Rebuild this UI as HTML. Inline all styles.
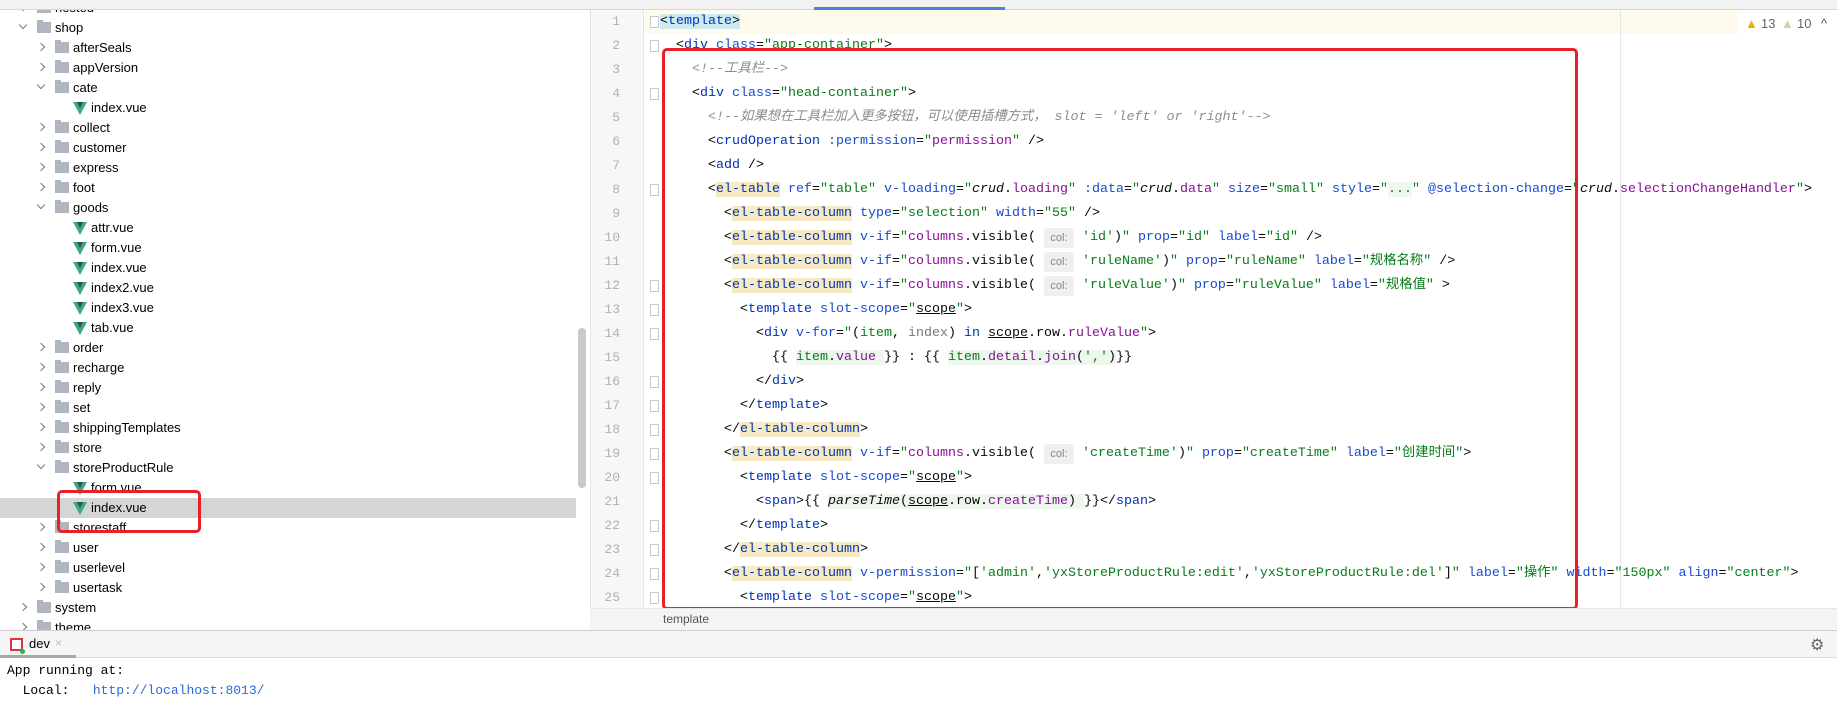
<!DOCTYPE html>
<html><head><meta charset="utf-8">
<style>
*{margin:0;padding:0;box-sizing:border-box}
body{width:1837px;height:693px;overflow:hidden;background:#fff;position:relative;font-family:"Liberation Sans","Noto Sans CJK SC",sans-serif}
.abs{position:absolute}
.topbar{left:0;top:0;width:1837px;height:10px;background:#f2f2f2;border-bottom:1px solid #d6d6d6}
.tree{left:0;top:10px;width:590px;height:620px;overflow:hidden}
.row{position:absolute;left:0;width:576px;height:20px;font-size:13px;line-height:20px;color:#000;white-space:nowrap}
.row.sel{background:#d5d5d5;width:576px}
.chev{position:absolute;top:6px;width:6px;height:6px;border-right:1px solid #777;border-bottom:1px solid #777}
.chev.r{transform:rotate(-45deg)}
.chev.d{transform:rotate(45deg);top:4px}
.fold{position:absolute;top:4px;width:14px;height:11px;background:#afb6bf}
.fold:before{content:"";position:absolute;left:0;top:-2px;width:6px;height:2px;background:#afb6bf}
.vue{position:absolute;top:4px;width:0;height:0;border-left:7px solid transparent;border-right:7px solid transparent;border-top:13px solid #3aa882}
.vue:after{content:"";position:absolute;left:-3px;top:-13px;border-left:3px solid transparent;border-right:3px solid transparent;border-top:6px solid #2f4d5e}
.txt{position:absolute;top:0}
.sb{left:578px;top:328px;width:8px;height:160px;background:#c9c9c9;border-radius:4px}
.gutter{left:590px;top:10px;width:54px;height:598px;background:#f7f7f7;border-right:1px solid #e4e4e4;border-left:1px solid #e4e4e4}
.ln{position:absolute;left:590px;width:30px;text-align:right;font-family:"Liberation Mono",monospace;font-size:13px;color:#adb1b8;line-height:24px}
.fm{position:absolute;left:650px;width:9px;height:12px;border:1px solid #c8c8c8;border-radius:1px;background:#fff}
.code{left:660px;top:10px;font-family:"Liberation Mono","Noto Sans CJK SC",monospace;font-size:13.33px;line-height:24px;white-space:pre;color:#080808}
.t{color:#0033b3}.a{color:#174ad4}.v{color:#067d17}.c{color:#8c8c8c;font-style:italic}.p{color:#871094}.i{font-style:italic}
.hl{background:#f5eac3}.g{background:#edf7ee}.u{text-decoration:underline}
.h{display:inline-block;width:30px;height:20px;line-height:20px;background:#efefef;color:#888;font-size:11px;text-align:center;border-radius:3px;vertical-align:top;margin-top:2px;font-family:"Liberation Sans",sans-serif}
.cur{background:#fefbec;left:645px;top:10px;width:1092px;height:24px}
.margin{left:1620px;top:10px;width:1px;height:598px;background:#e6e6e6}
.crumb{left:590px;top:608px;width:1247px;height:22px;background:#f4f4f4;border-top:1px solid #e6e6e6}
.btab{left:0;top:630px;width:1837px;height:28px;background:#f5f5f5;border-top:1px solid #cfcfcf;border-bottom:1px solid #dcdcdc}
.red{border:3px solid #e8202a;border-radius:5px}
</style></head><body>
<div class="abs topbar"></div>
<div class="abs" style="left:814px;top:7px;width:191px;height:3px;background:#4a84d8"></div>

<div class="abs tree">
<div class="row" style="top:-12px"><span class="chev r" style="left:20px"></span><span class="fold" style="left:37px"></span><span class="txt" style="left:55px">nested</span></div>
<div class="row" style="top:8px"><span class="chev d" style="left:20px"></span><span class="fold" style="left:37px"></span><span class="txt" style="left:55px">shop</span></div>
<div class="row" style="top:28px"><span class="chev r" style="left:38px"></span><span class="fold" style="left:55px"></span><span class="txt" style="left:73px">afterSeals</span></div>
<div class="row" style="top:48px"><span class="chev r" style="left:38px"></span><span class="fold" style="left:55px"></span><span class="txt" style="left:73px">appVersion</span></div>
<div class="row" style="top:68px"><span class="chev d" style="left:38px"></span><span class="fold" style="left:55px"></span><span class="txt" style="left:73px">cate</span></div>
<div class="row" style="top:88px"><span class="vue" style="left:73px"></span><span class="txt" style="left:91px">index.vue</span></div>
<div class="row" style="top:108px"><span class="chev r" style="left:38px"></span><span class="fold" style="left:55px"></span><span class="txt" style="left:73px">collect</span></div>
<div class="row" style="top:128px"><span class="chev r" style="left:38px"></span><span class="fold" style="left:55px"></span><span class="txt" style="left:73px">customer</span></div>
<div class="row" style="top:148px"><span class="chev r" style="left:38px"></span><span class="fold" style="left:55px"></span><span class="txt" style="left:73px">express</span></div>
<div class="row" style="top:168px"><span class="chev r" style="left:38px"></span><span class="fold" style="left:55px"></span><span class="txt" style="left:73px">foot</span></div>
<div class="row" style="top:188px"><span class="chev d" style="left:38px"></span><span class="fold" style="left:55px"></span><span class="txt" style="left:73px">goods</span></div>
<div class="row" style="top:208px"><span class="vue" style="left:73px"></span><span class="txt" style="left:91px">attr.vue</span></div>
<div class="row" style="top:228px"><span class="vue" style="left:73px"></span><span class="txt" style="left:91px">form.vue</span></div>
<div class="row" style="top:248px"><span class="vue" style="left:73px"></span><span class="txt" style="left:91px">index.vue</span></div>
<div class="row" style="top:268px"><span class="vue" style="left:73px"></span><span class="txt" style="left:91px">index2.vue</span></div>
<div class="row" style="top:288px"><span class="vue" style="left:73px"></span><span class="txt" style="left:91px">index3.vue</span></div>
<div class="row" style="top:308px"><span class="vue" style="left:73px"></span><span class="txt" style="left:91px">tab.vue</span></div>
<div class="row" style="top:328px"><span class="chev r" style="left:38px"></span><span class="fold" style="left:55px"></span><span class="txt" style="left:73px">order</span></div>
<div class="row" style="top:348px"><span class="chev r" style="left:38px"></span><span class="fold" style="left:55px"></span><span class="txt" style="left:73px">recharge</span></div>
<div class="row" style="top:368px"><span class="chev r" style="left:38px"></span><span class="fold" style="left:55px"></span><span class="txt" style="left:73px">reply</span></div>
<div class="row" style="top:388px"><span class="chev r" style="left:38px"></span><span class="fold" style="left:55px"></span><span class="txt" style="left:73px">set</span></div>
<div class="row" style="top:408px"><span class="chev r" style="left:38px"></span><span class="fold" style="left:55px"></span><span class="txt" style="left:73px">shippingTemplates</span></div>
<div class="row" style="top:428px"><span class="chev r" style="left:38px"></span><span class="fold" style="left:55px"></span><span class="txt" style="left:73px">store</span></div>
<div class="row" style="top:448px"><span class="chev d" style="left:38px"></span><span class="fold" style="left:55px"></span><span class="txt" style="left:73px">storeProductRule</span></div>
<div class="row" style="top:468px"><span class="vue" style="left:73px"></span><span class="txt" style="left:91px">form.vue</span></div>
<div class="row sel" style="top:488px"><span class="vue" style="left:73px"></span><span class="txt" style="left:91px">index.vue</span></div>
<div class="row" style="top:508px"><span class="chev r" style="left:38px"></span><span class="fold" style="left:55px"></span><span class="txt" style="left:73px">storestaff</span></div>
<div class="row" style="top:528px"><span class="chev r" style="left:38px"></span><span class="fold" style="left:55px"></span><span class="txt" style="left:73px">user</span></div>
<div class="row" style="top:548px"><span class="chev r" style="left:38px"></span><span class="fold" style="left:55px"></span><span class="txt" style="left:73px">userlevel</span></div>
<div class="row" style="top:568px"><span class="chev r" style="left:38px"></span><span class="fold" style="left:55px"></span><span class="txt" style="left:73px">usertask</span></div>
<div class="row" style="top:588px"><span class="chev r" style="left:20px"></span><span class="fold" style="left:37px"></span><span class="txt" style="left:55px">system</span></div>
<div class="row" style="top:608px"><span class="chev r" style="left:20px"></span><span class="fold" style="left:37px"></span><span class="txt" style="left:55px">theme</span></div>
</div>
<div class="abs sb"></div>
<div class="abs red" style="left:57px;top:490px;width:144px;height:43px"></div>

<div class="abs gutter"></div>
<div class="abs cur"></div>
<div class="abs margin"></div>
<div class="abs" style="left:1737px;top:11px;width:96px;height:26px;background:#fff;font-size:13px;line-height:26px;color:#666">
<span style="position:absolute;left:8px;color:#e3b500">▲</span><span style="position:absolute;left:24px">13</span>
<span style="position:absolute;left:44px;color:#d9ccaa">▲</span><span style="position:absolute;left:60px">10</span>
<span style="position:absolute;left:84px;color:#555">^</span></div>

<div class="abs" style="left:0;top:10px">
<div class="ln" style="top:0;left:590px">1</div><div class="ln" style="top:24px;left:590px">2</div><div class="ln" style="top:48px;left:590px">3</div><div class="ln" style="top:72px;left:590px">4</div><div class="ln" style="top:96px;left:590px">5</div><div class="ln" style="top:120px;left:590px">6</div><div class="ln" style="top:144px;left:590px">7</div><div class="ln" style="top:168px;left:590px">8</div><div class="ln" style="top:192px;left:590px">9</div><div class="ln" style="top:216px;left:590px">10</div><div class="ln" style="top:240px;left:590px">11</div><div class="ln" style="top:264px;left:590px">12</div><div class="ln" style="top:288px;left:590px">13</div><div class="ln" style="top:312px;left:590px">14</div><div class="ln" style="top:336px;left:590px">15</div><div class="ln" style="top:360px;left:590px">16</div><div class="ln" style="top:384px;left:590px">17</div><div class="ln" style="top:408px;left:590px">18</div><div class="ln" style="top:432px;left:590px">19</div><div class="ln" style="top:456px;left:590px">20</div><div class="ln" style="top:480px;left:590px">21</div><div class="ln" style="top:504px;left:590px">22</div><div class="ln" style="top:528px;left:590px">23</div><div class="ln" style="top:552px;left:590px">24</div><div class="ln" style="top:576px;left:590px">25</div>
<div class="fm" style="top:6px"></div><div class="fm" style="top:30px"></div><div class="fm" style="top:78px"></div><div class="fm" style="top:174px"></div><div class="fm" style="top:270px"></div><div class="fm" style="top:294px"></div><div class="fm" style="top:318px"></div><div class="fm" style="top:366px"></div><div class="fm" style="top:390px"></div><div class="fm" style="top:414px"></div><div class="fm" style="top:438px"></div><div class="fm" style="top:462px"></div><div class="fm" style="top:510px"></div><div class="fm" style="top:534px"></div><div class="fm" style="top:558px"></div><div class="fm" style="top:582px"></div>
</div>

<div class="abs code"><span style="background:#cdeaf0">&lt;<span class="t">template</span>&gt;</span>
  &lt;<span class="t">div</span> <span class="a">class</span>=<span class="v">"app-container"</span>&gt;
    <span class="c">&lt;!--工具栏--&gt;</span>
    &lt;<span class="t">div</span> <span class="a">class</span>=<span class="v">"head-container"</span>&gt;
      <span class="c">&lt;!--如果想在工具栏加入更多按钮，可以使用插槽方式， slot = 'left' or 'right'--&gt;</span>
      &lt;<span class="t">crudOperation</span> <span class="a">:permission</span>=<span class="v">"</span><span class="p">permission</span><span class="v">"</span> /&gt;
      &lt;<span class="t">add</span> /&gt;
      &lt;<span class="t hl">el-table</span> <span class="a">ref</span>=<span class="v">"table"</span> <span class="a">v-loading</span>=<span class="v">"</span><span class="i">crud</span>.<span class="p">loading</span><span class="v">"</span> <span class="a">:data</span>=<span class="v">"</span><span class="i">crud</span>.<span class="p">data</span><span class="v">"</span> <span class="a">size</span>=<span class="v">"small"</span> <span class="a">style</span>=<span class="v">"<span class="g">...</span>"</span> <span class="a">@selection-change</span>=<span class="v">"</span><span class="i">crud</span>.<span class="p">selectionChangeHandler</span><span class="v">"</span>&gt;
        &lt;<span class="t hl">el-table-column</span> <span class="a">type</span>=<span class="v">"selection"</span> <span class="a">width</span>=<span class="v">"55"</span> /&gt;
        &lt;<span class="t hl">el-table-column</span> <span class="a">v-if</span>=<span class="v">"</span><span class="p">columns</span>.visible( <span class="h">col:</span> <span class="v">'id'</span>)<span class="v">"</span> <span class="a">prop</span>=<span class="v">"id"</span> <span class="a">label</span>=<span class="v">"id"</span> /&gt;
        &lt;<span class="t hl">el-table-column</span> <span class="a">v-if</span>=<span class="v">"</span><span class="p">columns</span>.visible( <span class="h">col:</span> <span class="v">'ruleName'</span>)<span class="v">"</span> <span class="a">prop</span>=<span class="v">"ruleName"</span> <span class="a">label</span>=<span class="v">"规格名称"</span> /&gt;
        &lt;<span class="t hl">el-table-column</span> <span class="a">v-if</span>=<span class="v">"</span><span class="p">columns</span>.visible( <span class="h">col:</span> <span class="v">'ruleValue'</span>)<span class="v">"</span> <span class="a">prop</span>=<span class="v">"ruleValue"</span> <span class="a">label</span>=<span class="v">"规格值"</span> &gt;
          &lt;<span class="t">template</span> <span class="a">slot-scope</span>=<span class="v">"</span><span class="u">scope</span><span class="v">"</span>&gt;
            &lt;<span class="t">div</span> <span class="a">v-for</span>=<span class="v">"</span>(<span class="v">item</span>, <span style="color:#777">index</span>) <span class="t">in</span> <span class="u">scope</span>.row.<span class="p">ruleValue</span><span class="v">"</span>&gt;
              {{ <span class="g"><span class="v">item</span>.<span class="p">value</span> </span>}} : {{ <span class="g"><span class="v">item</span>.<span class="p">detail</span>.<span class="p">join</span>(<span class="v">','</span>)</span>}}
            &lt;/<span class="t">div</span>&gt;
          &lt;/<span class="t">template</span>&gt;
        &lt;/<span class="t hl">el-table-column</span>&gt;
        &lt;<span class="t hl">el-table-column</span> <span class="a">v-if</span>=<span class="v">"</span><span class="p">columns</span>.visible( <span class="h">col:</span> <span class="v">'createTime'</span>)<span class="v">"</span> <span class="a">prop</span>=<span class="v">"createTime"</span> <span class="a">label</span>=<span class="v">"创建时间"</span>&gt;
          &lt;<span class="t">template</span> <span class="a">slot-scope</span>=<span class="v">"</span><span class="u">scope</span><span class="v">"</span>&gt;
            &lt;<span class="t">span</span>&gt;{{ <span class="g"><span class="i">parseTime</span>(<span class="u">scope</span>.row.<span class="p">createTime</span>) </span>}}&lt;/<span class="t">span</span>&gt;
          &lt;/<span class="t">template</span>&gt;
        &lt;/<span class="t hl">el-table-column</span>&gt;
        &lt;<span class="t hl">el-table-column</span> <span class="a">v-permission</span>=<span class="v">"</span>[<span class="v">'admin'</span>,<span class="v">'yxStoreProductRule:edit'</span>,<span class="v">'yxStoreProductRule:del'</span>]<span class="v">"</span> <span class="a">label</span>=<span class="v">"操作"</span> <span class="a">width</span>=<span class="v">"150px"</span> <span class="a">align</span>=<span class="v">"center"</span>&gt;
          &lt;<span class="t">template</span> <span class="a">slot-scope</span>=<span class="v">"</span><span class="u">scope</span><span class="v">"</span>&gt;</div>

<div class="abs red" style="left:662px;top:48px;width:916px;height:562px"></div>

<div class="abs crumb"><span style="position:absolute;left:73px;top:3px;font-size:12px;color:#555">template</span></div>
<div class="abs btab">
<span style="position:absolute;left:10px;top:7px;width:13px;height:13px;border:2px solid #d9363e;background:#fff"></span>
<span style="position:absolute;left:20px;top:18px;width:5px;height:5px;border-radius:50%;background:#2db343"></span>
<span style="position:absolute;left:29px;top:5px;font-size:13px;color:#000">dev</span>
<span style="position:absolute;left:55px;top:5px;font-size:12px;color:#bbb">×</span>
<span style="position:absolute;left:0;top:24px;width:76px;height:3px;background:#a8a8a8"></span>
<span style="position:absolute;left:1810px;top:4px;font-size:16px;color:#666">⚙</span>
</div>
<div class="abs" style="left:7px;top:661px;font-family:'Liberation Mono',monospace;font-size:13px;line-height:20px;white-space:pre;color:#000">App running at:
  Local:   <span style="color:#2a6bd4">http://localhost:8013/</span></div>
</body></html>
